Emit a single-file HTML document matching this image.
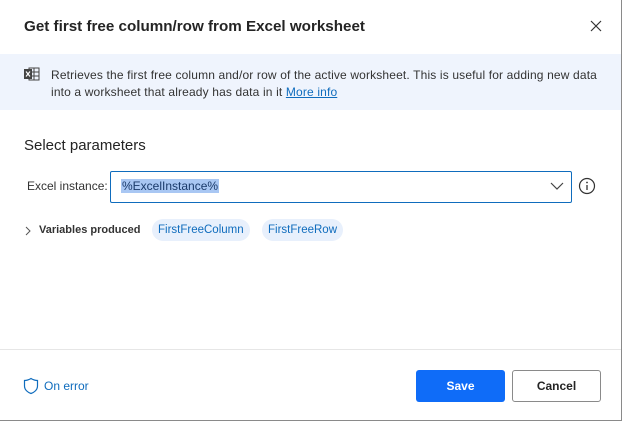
<!DOCTYPE html>
<html><head><style>
*{box-sizing:border-box;margin:0;padding:0}
body{width:624px;height:423px;background:#fff;font-family:"Liberation Sans",sans-serif;position:relative;overflow:hidden;color:#242424}
.frame{position:absolute;left:0;top:0;width:622px;height:421px;border-right:1px solid #8a8a8a;border-bottom:1px solid #8a8a8a}
.t{position:absolute;white-space:nowrap}
</style></head><body>
<div class="frame"></div>
<div class="t" style="left:24px;top:18px;font-size:15.2px;font-weight:bold;color:#242424">Get first free column/row from Excel worksheet</div>
<svg style="position:absolute;left:589px;top:19px" width="14" height="14"><path d="M2 2L12 12M12 2L2 12" stroke="#333" stroke-width="1.2"/></svg>
<div style="position:absolute;left:0;top:54px;width:621px;height:56px;background:#eff4fd"></div>
<svg style="position:absolute;left:24px;top:67px" width="16" height="14"><rect x="5" y="1" width="10" height="12" fill="none" stroke="#444"/><path d="M10 1V13M5 5H15M5 9H15" stroke="#444"/><rect x="0" y="2" width="8" height="10" fill="#444"/><path d="M2 4.5L6 9.5M6 4.5L2 9.5" stroke="#fff" stroke-width="1.2"/></svg>
<div class="t" style="left:51px;top:67px;font-size:12px;line-height:17px;color:#333;letter-spacing:0.15px">Retrieves the first free column and/or row of the active worksheet. This is useful for adding new data<br>into a worksheet that already has data in it <span style="color:#0f6cbd;text-decoration:underline">More info</span></div>
<div class="t" style="left:24px;top:137px;font-size:15px;color:#242424">Select parameters</div>
<div class="t" style="left:27px;top:179px;font-size:12px;color:#333">Excel instance:</div>
<div style="position:absolute;left:110px;top:171px;width:462px;height:32px;border:1px solid #0f6cbd;border-radius:2px"></div>
<div class="t" style="left:121px;top:179px;font-size:12px;background:#a9c7f3;color:#1a3a6a;padding:0 1px">%ExcelInstance%</div>
<svg style="position:absolute;left:550px;top:181px" width="14" height="10"><path d="M1 2L7 8L13 2" fill="none" stroke="#444" stroke-width="1.2"/></svg>
<svg style="position:absolute;left:578px;top:177px" width="18" height="18"><circle cx="9" cy="9" r="7.5" fill="none" stroke="#333" stroke-width="1.2"/><path d="M9 8V13" stroke="#333" stroke-width="1.3"/><circle cx="9" cy="5.5" r=".9" fill="#333"/></svg>
<svg style="position:absolute;left:24px;top:226px" width="8" height="10"><path d="M2 1L6 5L2 9" fill="none" stroke="#555" stroke-width="1"/></svg>
<div class="t" style="left:39px;top:224px;font-size:11px;font-weight:bold;color:#333">Variables produced</div>
<div class="t" style="left:152px;top:219px;height:22px;padding:0 6px;line-height:22px;border-radius:11px;background:#e8f0fc;color:#0f6cbd;font-size:11.5px">FirstFreeColumn</div>
<div class="t" style="left:262px;top:219px;height:22px;padding:0 6px;line-height:22px;border-radius:11px;background:#e8f0fc;color:#0f6cbd;font-size:11.5px">FirstFreeRow</div>
<div style="position:absolute;left:0;top:349px;width:621px;height:1px;background:#e6e6e6"></div>
<svg style="position:absolute;left:23px;top:377px" width="16" height="18"><path d="M8 1.5C5.5 3 3.5 3.5 1.5 3.5V9C1.5 13 5 15.5 8 16.5C11 15.5 14.5 13 14.5 9V3.5C12.5 3.5 10.5 3 8 1.5Z" fill="none" stroke="#0f6cbd" stroke-width="1.2"/></svg>
<div class="t" style="left:44px;top:379px;font-size:12px;color:#0f6cbd">On error</div>
<div class="t" style="left:416px;top:370px;width:89px;height:32px;background:#0f6cf8;border-radius:3px;color:#fff;font-size:12px;font-weight:bold;text-align:center;line-height:32px">Save</div>
<div class="t" style="left:512px;top:370px;width:89px;height:32px;border:1px solid #8a8a8a;border-radius:3px;color:#242424;font-size:12px;font-weight:bold;text-align:center;line-height:30px">Cancel</div>
</body></html>
